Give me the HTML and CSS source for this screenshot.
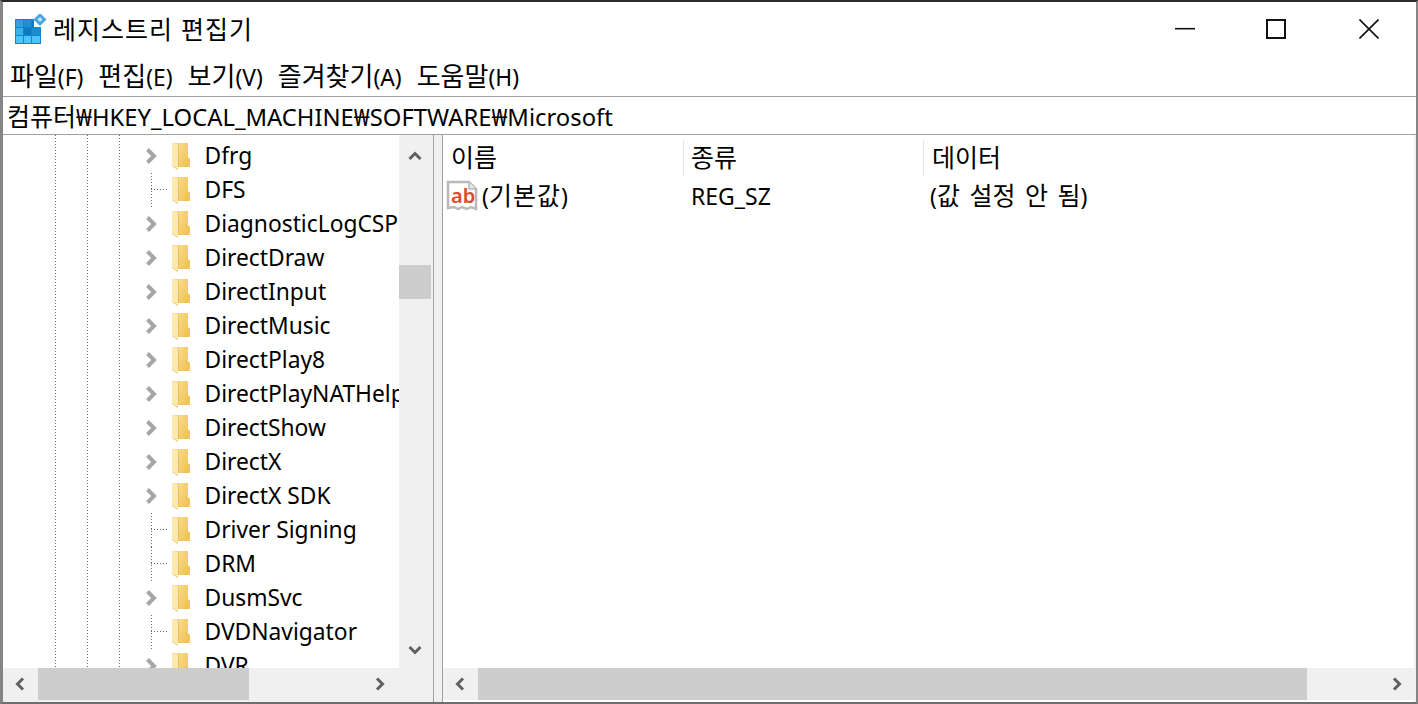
FILE: index.html
```html
<!DOCTYPE html>
<html lang="ko">
  <head>
    <meta charset="UTF-8" />
    <title>레지스트리 편집기</title>
    <link rel="stylesheet" href="styles.css">
  </head>
  <body>
    <svg class="defs" width="0" height="0">
      <defs>
        <linearGradient id="foldergrad" x1="0" y1="0" x2="1" y2="0.5">
          <stop offset="0" stop-color="#fbe6a0" />
          <stop offset="1" stop-color="#f1c45a" />
        </linearGradient>
        <symbol id="folder" viewBox="0 0 18 27">
          <path d="M0 0h16v14l2 2v8H5V2z" fill="url(#foldergrad)" />
          <path d="M0 0l6 2v25l-6-4z" fill="#fce9ae" />
          <path d="M0 22.500l6 3.500v1l-6-4z" fill="#e6c26e" />
          <path d="M6 2h1v22H6z" fill="#e9bf5e" />
        </symbol>
        <symbol id="chev" viewBox="0 0 14 18">
          <path d="M2.500 2.500L9 9l-6.500 6.500" fill="none" stroke="#a6a6a6" stroke-width="4" />
        </symbol>
      </defs>
    </svg>
    <div class="window">
      <header class="titlebar">
        <svg class="appicon" width="32" height="32" viewBox="0 0 32 32">
          <path d="M0 5h19v8h7v17H0z" fill="#0f86cc" />
          <path d="M1 6h7v7H1z" fill="#2f9fdf" />
          <path d="M9 6h7v7H9z" fill="#1f8fd0" />
          <path d="M17 7h2v6h-2z" fill="#1778b8" />
          <path d="M1 14h7v7H1z" fill="#3ab0ea" />
          <path d="M9 14h7v7H9z" fill="#0f79bd" />
          <path d="M17 14h8v7h-8z" fill="#1d8bcd" />
          <path d="M1 22h7v7H1zM9 22h7v7H9zM17 22h8v7h-8z" fill="#4cc4fa" />
          <path d="M25 -1l6.500 6.500L25 12l-6.500-6.500z" fill="#4aa6dc" />
          <path d="M25 3l2.500 2.500L25 8l-2.500-2.500z" fill="#bfe4f7" />
        </svg>
        <div class="title">레지스트리 편집기</div>
        <div class="winbtns">
          <div class="winbtn">
            <svg width="20" height="20" viewBox="0 0 20 20"><path d="M0 9.700h20" stroke="#111" stroke-width="1.600" /></svg>
          </div>
          <div class="winbtn maxbtn">
            <svg width="20" height="20" viewBox="0 0 20 20"><path d="M1 1h18v18H1z" fill="none" stroke="#111" stroke-width="2" /></svg>
          </div>
          <div class="winbtn">
            <svg width="20" height="20" viewBox="0 0 20 20"><path d="M.5.500l19 19M19.500.500l-19 19" stroke="#111" stroke-width="1.600" /></svg>
          </div>
        </div>
      </header>
      <nav class="menubar">
        <span><span class="ko">파일</span>(F)</span>
        <span><span class="ko">편집</span>(E)</span>
        <span><span class="ko">보기</span>(V)</span>
        <span><span class="ko">즐겨찾기</span>(A)</span>
        <span><span class="ko">도움말</span>(H)</span>
      </nav>
      <div class="addressbar"><span class="ko">컴퓨터</span>₩HKEY_LOCAL_MACHINE₩SOFTWARE₩Microsoft</div>
      <main class="panes">
        <section class="treepane">
          <div class="treetop">
            <div class="tree">
              <div class="row"><span class="toggle"><svg width="14" height="18"><use href="#chev" /></svg></span><svg class="folder" width="18" height="27"><use href="#folder" /></svg><span class="label">Dfrg</span></div>
              <div class="row leaf"><span class="toggle"></span><svg class="folder" width="18" height="27"><use href="#folder" /></svg><span class="label">DFS</span></div>
              <div class="row"><span class="toggle"><svg width="14" height="18"><use href="#chev" /></svg></span><svg class="folder" width="18" height="27"><use href="#folder" /></svg><span class="label">DiagnosticLogCSP</span></div>
              <div class="row"><span class="toggle"><svg width="14" height="18"><use href="#chev" /></svg></span><svg class="folder" width="18" height="27"><use href="#folder" /></svg><span class="label">DirectDraw</span></div>
              <div class="row"><span class="toggle"><svg width="14" height="18"><use href="#chev" /></svg></span><svg class="folder" width="18" height="27"><use href="#folder" /></svg><span class="label">DirectInput</span></div>
              <div class="row"><span class="toggle"><svg width="14" height="18"><use href="#chev" /></svg></span><svg class="folder" width="18" height="27"><use href="#folder" /></svg><span class="label">DirectMusic</span></div>
              <div class="row"><span class="toggle"><svg width="14" height="18"><use href="#chev" /></svg></span><svg class="folder" width="18" height="27"><use href="#folder" /></svg><span class="label">DirectPlay8</span></div>
              <div class="row"><span class="toggle"><svg width="14" height="18"><use href="#chev" /></svg></span><svg class="folder" width="18" height="27"><use href="#folder" /></svg><span class="label">DirectPlayNATHelp</span></div>
              <div class="row"><span class="toggle"><svg width="14" height="18"><use href="#chev" /></svg></span><svg class="folder" width="18" height="27"><use href="#folder" /></svg><span class="label">DirectShow</span></div>
              <div class="row"><span class="toggle"><svg width="14" height="18"><use href="#chev" /></svg></span><svg class="folder" width="18" height="27"><use href="#folder" /></svg><span class="label">DirectX</span></div>
              <div class="row"><span class="toggle"><svg width="14" height="18"><use href="#chev" /></svg></span><svg class="folder" width="18" height="27"><use href="#folder" /></svg><span class="label">DirectX SDK</span></div>
              <div class="row leaf"><span class="toggle"></span><svg class="folder" width="18" height="27"><use href="#folder" /></svg><span class="label">Driver Signing</span></div>
              <div class="row leaf"><span class="toggle"></span><svg class="folder" width="18" height="27"><use href="#folder" /></svg><span class="label">DRM</span></div>
              <div class="row"><span class="toggle"><svg width="14" height="18"><use href="#chev" /></svg></span><svg class="folder" width="18" height="27"><use href="#folder" /></svg><span class="label">DusmSvc</span></div>
              <div class="row leaf"><span class="toggle"></span><svg class="folder" width="18" height="27"><use href="#folder" /></svg><span class="label">DVDNavigator</span></div>
              <div class="row"><span class="toggle"><svg width="14" height="18"><use href="#chev" /></svg></span><svg class="folder" width="18" height="27"><use href="#folder" /></svg><span class="label">DVR</span></div>
            </div>
            <div class="vscroll">
              <div class="sbtn up"><svg width="14" height="10" viewBox="0 0 14 10"><path d="M1.500 8L7 2.500 12.500 8" fill="none" stroke="#606060" stroke-width="3" /></svg></div>
              <div class="vtrack"><div class="vthumb"></div></div>
              <div class="sbtn"><svg width="14" height="10" viewBox="0 0 14 10"><path d="M1.500 2L7 7.500 12.500 2" fill="none" stroke="#606060" stroke-width="3" /></svg></div>
            </div>
          </div>
          <div class="hscroll short">
            <div class="sbtn"><svg width="10" height="14" viewBox="0 0 10 14"><path d="M8 1.500L2.500 7 8 12.500" fill="none" stroke="#606060" stroke-width="3" /></svg></div>
            <div class="htrack"><div class="hthumb thumb-left"></div></div>
            <div class="sbtn"><svg width="10" height="14" viewBox="0 0 10 14"><path d="M2 1.500L7.500 7 2 12.500" fill="none" stroke="#606060" stroke-width="3" /></svg></div>
          </div>
        </section>
        <section class="listpane">
          <div class="listhead">
            <div class="col"><span class="ko">이름</span></div>
            <div class="col second"><span class="ko">종류</span></div>
            <div class="col last"><span class="ko">데이터</span></div>
          </div>
          <div class="listrow">
            <div class="cell name">
              <svg class="regicon" width="33" height="32" viewBox="0 0 33 32">
                <path d="M2 2h21l7 7v20l-5-2-4 2-5-2-4 2-4-2-6 1z" fill="#fff" stroke="#b9b9b9" stroke-width="2.500" />
                <path d="M23 2v7h7" fill="#e6e6e6" stroke="#b9b9b9" stroke-width="1.500" />
                <text class="abtext" x="5" y="23">ab</text>
              </svg>
              <span>(<span class="ko spaced">기본값</span>)</span>
            </div>
            <div class="cell second">REG_SZ</div>
            <div class="cell data">(<span class="ko">값 설정 안 됨</span>)</div>
          </div>
          <div class="listspacer"></div>
          <div class="hscroll">
            <div class="sbtn"><svg width="10" height="14" viewBox="0 0 10 14"><path d="M8 1.500L2.500 7 8 12.500" fill="none" stroke="#606060" stroke-width="3" /></svg></div>
            <div class="htrack"><div class="hthumb thumb-right"></div></div>
            <div class="sbtn"><svg width="10" height="14" viewBox="0 0 10 14"><path d="M2 1.500L7.500 7 2 12.500" fill="none" stroke="#606060" stroke-width="3" /></svg></div>
          </div>
        </section>
      </main>
    </div>
  </body>
</html>
```
FILE: styles.css
```css
html,
body {
  margin: 0;
  padding: 0;
  height: 100%;
}
body {
  font-family: "Noto Sans", "Noto Sans CJK KR", sans-serif;
  font-size: 23px;
  color: #000;
  overflow: hidden;
}
.ko {
  font-family: "Noto Sans CJK KR", sans-serif;
  font-size: 25px;
  line-height: 1;
}
.ko.spaced {
  letter-spacing: 1px;
}
.defs {
  display: block;
  height: 0;
}
.window {
  box-sizing: border-box;
  width: 1418px;
  height: 704px;
  display: flex;
  flex-direction: column;
  background: #fff;
  border-top: 2px solid #2b2b2b;
  border-left: 3px solid #858585;
  border-right: 2px solid #858585;
  border-bottom: 2px solid #6f6f6f;
}

.titlebar {
  height: 54px;
  display: flex;
  align-items: center;
  flex-shrink: 0;
}
.appicon {
  margin-left: 12px;
  margin-right: 6px;
  margin-top: 2px;
}
.title {
  flex: 1;
  font-family: "Noto Sans CJK KR", sans-serif;
  font-size: 25px;
  letter-spacing: 1px;
  margin-top: -2px;
}
.winbtns {
  display: flex;
  margin-right: 1px;
}
.winbtn {
  width: 92px;
  height: 54px;
  display: flex;
  align-items: center;
  justify-content: center;
}
.maxbtn {
  box-sizing: border-box;
  padding-right: 2px;
}

.menubar {
  height: 40px;
  box-sizing: border-box;
  display: flex;
  align-items: center;
  gap: 15px;
  padding: 3px 0 0 7px;
  flex-shrink: 0;
  font-size: 22.8px;
}
.menubar .ko {
  font-size: 26px;
}

.addressbar {
  height: 39px;
  line-height: 39px;
  box-sizing: border-box;
  border-top: 1px solid #a0a0a0;
  border-bottom: 1px solid #a0a0a0;
  padding: 1px 0 0 4px;
  flex-shrink: 0;
  white-space: nowrap;
  font-size: 23.8px;
}

.panes {
  flex: 1;
  min-height: 0;
  display: flex;
  background: #f0f0f0;
}
.treepane {
  width: 428px;
  display: flex;
  flex-direction: column;
  border-right: 1px solid #a0a0a0;
  flex-shrink: 0;
  padding: 0 2px 2px 0;
  box-sizing: content-box;
}
.treetop {
  flex: 1;
  min-height: 0;
  display: flex;
}
.tree {
  flex: 1;
  min-width: 0;
  height: 100%;
  overflow: hidden;
  padding-top: 4px;
  box-sizing: border-box;
  background-color: #fff;
  background-image:
    repeating-linear-gradient(to bottom, #6a6a6a 0 1px, transparent 1px 3px),
    repeating-linear-gradient(to bottom, #6a6a6a 0 1px, transparent 1px 3px),
    repeating-linear-gradient(to bottom, #6a6a6a 0 1px, transparent 1px 3px);
  background-size: 1px 100%;
  background-repeat: no-repeat;
  background-position: 52px 0, 84px 0, 116px 0;
}
.row {
  height: 34px;
  display: flex;
  align-items: center;
  white-space: nowrap;
  overflow: hidden;
}
.toggle {
  width: 169px;
  height: 34px;
  box-sizing: border-box;
  flex-shrink: 0;
  display: flex;
  align-items: center;
  padding-left: 142px;
}
.leaf .toggle {
  background-image:
    repeating-linear-gradient(to bottom, #6a6a6a 0 1px, transparent 1px 3px),
    repeating-linear-gradient(to right, #6a6a6a 0 1px, transparent 1px 3px);
  background-repeat: no-repeat;
  background-size: 1px 34px, 16px 1px;
  background-position: 148px 0, 148px 16px;
}
.folder {
  flex-shrink: 0;
}
.label {
  margin-left: 14.5px;
  line-height: 34px;
  font-size: 22.8px;
}

.vscroll {
  width: 32px;
  flex-shrink: 0;
  display: flex;
  flex-direction: column;
  background: #f0f0f0;
}
.vtrack {
  flex: 1;
}
.vthumb {
  height: 34px;
  margin-top: 88px;
  background: #cdcdcd;
}
.sbtn {
  width: 34px;
  height: 32px;
  flex-shrink: 0;
  display: flex;
  align-items: center;
  justify-content: center;
}
.vscroll .sbtn {
  width: 32px;
  height: 36px;
}
.vscroll .sbtn.up {
  height: 42px;
}
.hscroll {
  height: 32px;
  flex-shrink: 0;
  display: flex;
  background: #f0f0f0;
}
.hscroll.short {
  margin-right: 34px;
}
.htrack {
  flex: 1;
  min-width: 0;
  display: flex;
}
.hthumb {
  height: 32px;
  margin-left: 1px;
  background: #cdcdcd;
}
.thumb-left {
  width: 211px;
}
.thumb-right {
  width: 829px;
}

.listpane {
  flex: 1;
  min-width: 0;
  display: flex;
  flex-direction: column;
  margin: 0 2px 0 8px;
  border-left: 1px solid #a0a0a0;
  background: #fff;
  padding-bottom: 2px;
  background-clip: padding-box;
}
.listhead {
  height: 45px;
  display: grid;
  grid-template-columns: 241px 240px 1fr;
  flex-shrink: 0;
}
.col {
  margin-top: 5px;
  height: 36px;
  line-height: 36px;
  padding-left: 8px;
  border-right: 1px solid #e5e5e5;
}
.col.second {
  padding-left: 7px;
}
.col.last {
  border-right: none;
}
.listrow {
  height: 32px;
  display: grid;
  grid-template-columns: 241px 240px 1fr;
  align-items: center;
  flex-shrink: 0;
}
.cell {
  padding-left: 8px;
  white-space: nowrap;
}
.cell.second {
  padding-left: 7px;
}
.cell.name {
  display: flex;
  align-items: center;
  padding-left: 3px;
  gap: 3px;
}
.cell.data {
  padding-left: 6px;
  word-spacing: 2.5px;
}
.regicon {
  flex-shrink: 0;
}
.abtext {
  font-family: "Noto Sans", sans-serif;
  font-size: 20px;
  font-weight: 600;
  fill: #dd4b2c;
}
.listspacer {
  flex: 1;
}
```
